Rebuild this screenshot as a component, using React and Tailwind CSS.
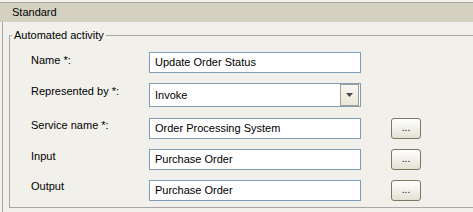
const font = { fontFamily: '"Liberation Sans", Arial, sans-serif' };

function Field({ value }) {
  return (
    <div className="w-[212px] h-[21px] border border-[#7f9db9] bg-white pl-[5px] flex items-center text-[11px] leading-[13px] text-black">
      {value}
    </div>
  );
}

function Dots() {
  return (
    <button className="ml-[30px] w-[30px] h-[21px] rounded-[3px] border border-[#7b7862] bg-gradient-to-b from-white to-[#e4e1d4] text-[10px] leading-[10px] text-black flex items-center justify-center pb-[2px]">
      ...
    </button>
  );
}

function Row({ label, labelTop, children, className = '' }) {
  return (
    <div className={`flex items-start ${className}`}>
      <div className={`w-[118px] text-[11px] leading-[13px] text-black ${labelTop}`}>{label}</div>
      {children}
    </div>
  );
}

export default function App() {
  return (
    <div className="w-[473px] h-[212px] overflow-hidden bg-[#f2f0eb] pt-[2px]" style={font}>
      {/* header strip */}
      <div className="h-[20px] border-t border-[#a7a6a4] bg-[#d5d1c1] pl-[12px] text-[11px] leading-[19px] text-black">
        Standard
      </div>

      <div className="ml-[2px] h-[190px] border-l border-[#a7a6a4] pl-[6px] pt-[7px]">
        <fieldset className="w-[480px] h-[179px] border border-[#a7a6a4] pl-[21px]">
          <legend className="-ml-[19px] px-[2px] text-[11px] leading-[13px] text-black">Automated activity</legend>

          <Row label="Name *:" labelTop="mt-[2px]" className="mt-[10px]">
            <Field value="Update Order Status" />
          </Row>

          <Row label="Represented by *:" labelTop="mt-[2px]" className="mt-[10px]">
            <div className="w-[212px] h-[24px] border border-[#7f9db9] bg-white pl-[5px] pr-[1px] py-[1px] flex items-center text-[11px] leading-[13px] text-black">
              <span className="flex-1">Invoke</span>
              <span className="w-[19px] h-[22px] border border-[#a39f8a] bg-gradient-to-b from-[#f7f6f1] to-[#e9e6da] flex items-center justify-center">
                <svg width="7" height="4" viewBox="0 0 7 4">
                  <path d="M0 0h7L3.5 4z" fill="#4a4a44" />
                </svg>
              </span>
            </div>
          </Row>

          <Row label="Service name *:" labelTop="mt-[1px]" className="mt-[11px]">
            <Field value="Order Processing System" />
            <Dots />
          </Row>

          <Row label="Input" labelTop="mt-[1px]" className="mt-[10px]">
            <Field value="Purchase Order" />
            <Dots />
          </Row>

          <Row label="Output" labelTop="mt-0" className="mt-[10px]">
            <Field value="Purchase Order" />
            <Dots />
          </Row>
        </fieldset>
      </div>
    </div>
  );
}
